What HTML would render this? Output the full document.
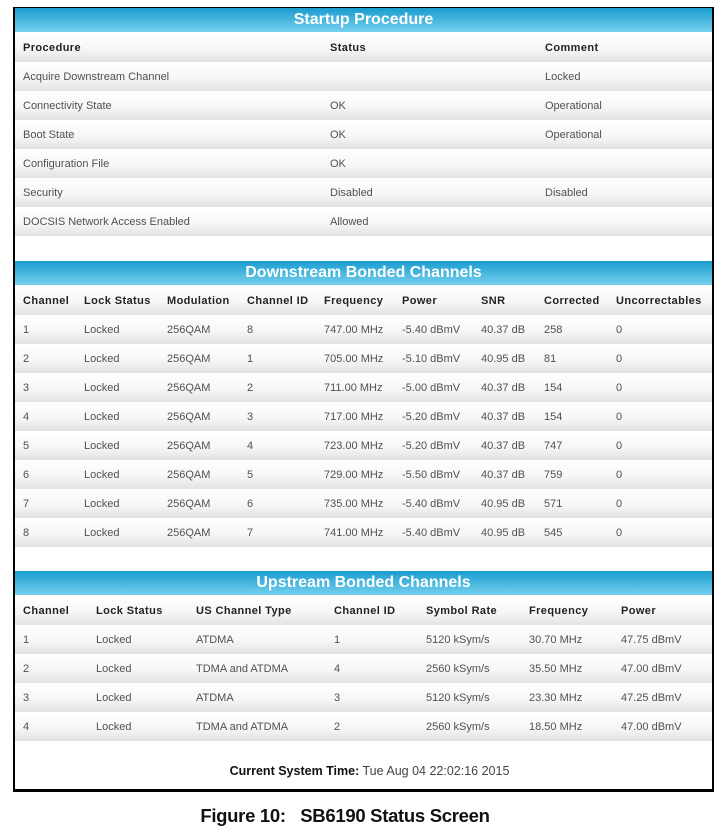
<!DOCTYPE html>
<html><head><meta charset="utf-8"><style>
*{margin:0;padding:0;box-sizing:border-box}
body{width:725px;height:833px;background:#fff;position:relative;font-family:"Liberation Sans",Arial,sans-serif;overflow:hidden}
.frame{position:absolute;left:13px;top:7px;width:701px;height:785px;border:2px solid #000;border-bottom-width:3px}
.bar{position:absolute;left:15px;width:697px;height:24px;background:linear-gradient(#1a9ccf,#76d0ee);color:#fff;font-weight:bold;font-size:16px;text-align:center;line-height:24px}
.row{position:absolute;left:15px;width:697px;height:29px;background:linear-gradient(#fff 0%,#f7f7f7 55%,#e2e2e2 100%)}
.row span{position:absolute;top:1px;line-height:29px;font-size:11px;color:#505050;white-space:nowrap}
.row.h span{font-weight:bold;color:#222;letter-spacing:.4px}
.time{position:absolute;top:764px;left:0;width:725px;text-align:center;font-size:12.5px;color:#444;padding-left:14px}
.time b{color:#111}
.cap{position:absolute;top:805px;left:0;width:690px;text-align:center;font-size:18.5px;font-weight:bold;color:#111;letter-spacing:-0.3px}
</style></head><body>
<div class="frame"></div>

<div class="bar" style="top:8px">Startup Procedure</div>
<div class="row h" style="top:33px"><span style="left:8px">Procedure</span><span style="left:315px">Status</span><span style="left:530px">Comment</span></div>
<div class="row" style="top:62px"><span style="left:8px">Acquire Downstream Channel</span><span style="left:530px">Locked</span></div>
<div class="row" style="top:91px"><span style="left:8px">Connectivity State</span><span style="left:315px">OK</span><span style="left:530px">Operational</span></div>
<div class="row" style="top:120px"><span style="left:8px">Boot State</span><span style="left:315px">OK</span><span style="left:530px">Operational</span></div>
<div class="row" style="top:149px"><span style="left:8px">Configuration File</span><span style="left:315px">OK</span></div>
<div class="row" style="top:178px"><span style="left:8px">Security</span><span style="left:315px">Disabled</span><span style="left:530px">Disabled</span></div>
<div class="row" style="top:207px"><span style="left:8px">DOCSIS Network Access Enabled</span><span style="left:315px">Allowed</span></div>

<div class="bar" style="top:261px">Downstream Bonded Channels</div>
<div class="row h" style="top:286px"><span style="left:8px">Channel</span><span style="left:69px">Lock Status</span><span style="left:152px">Modulation</span><span style="left:232px">Channel ID</span><span style="left:309px">Frequency</span><span style="left:387px">Power</span><span style="left:466px">SNR</span><span style="left:529px">Corrected</span><span style="left:601px">Uncorrectables</span></div>
<div class="row" style="top:315px"><span style="left:8px">1</span><span style="left:69px">Locked</span><span style="left:152px">256QAM</span><span style="left:232px">8</span><span style="left:309px">747.00 MHz</span><span style="left:387px">-5.40 dBmV</span><span style="left:466px">40.37 dB</span><span style="left:529px">258</span><span style="left:601px">0</span></div>
<div class="row" style="top:344px"><span style="left:8px">2</span><span style="left:69px">Locked</span><span style="left:152px">256QAM</span><span style="left:232px">1</span><span style="left:309px">705.00 MHz</span><span style="left:387px">-5.10 dBmV</span><span style="left:466px">40.95 dB</span><span style="left:529px">81</span><span style="left:601px">0</span></div>
<div class="row" style="top:373px"><span style="left:8px">3</span><span style="left:69px">Locked</span><span style="left:152px">256QAM</span><span style="left:232px">2</span><span style="left:309px">711.00 MHz</span><span style="left:387px">-5.00 dBmV</span><span style="left:466px">40.37 dB</span><span style="left:529px">154</span><span style="left:601px">0</span></div>
<div class="row" style="top:402px"><span style="left:8px">4</span><span style="left:69px">Locked</span><span style="left:152px">256QAM</span><span style="left:232px">3</span><span style="left:309px">717.00 MHz</span><span style="left:387px">-5.20 dBmV</span><span style="left:466px">40.37 dB</span><span style="left:529px">154</span><span style="left:601px">0</span></div>
<div class="row" style="top:431px"><span style="left:8px">5</span><span style="left:69px">Locked</span><span style="left:152px">256QAM</span><span style="left:232px">4</span><span style="left:309px">723.00 MHz</span><span style="left:387px">-5.20 dBmV</span><span style="left:466px">40.37 dB</span><span style="left:529px">747</span><span style="left:601px">0</span></div>
<div class="row" style="top:460px"><span style="left:8px">6</span><span style="left:69px">Locked</span><span style="left:152px">256QAM</span><span style="left:232px">5</span><span style="left:309px">729.00 MHz</span><span style="left:387px">-5.50 dBmV</span><span style="left:466px">40.37 dB</span><span style="left:529px">759</span><span style="left:601px">0</span></div>
<div class="row" style="top:489px"><span style="left:8px">7</span><span style="left:69px">Locked</span><span style="left:152px">256QAM</span><span style="left:232px">6</span><span style="left:309px">735.00 MHz</span><span style="left:387px">-5.40 dBmV</span><span style="left:466px">40.95 dB</span><span style="left:529px">571</span><span style="left:601px">0</span></div>
<div class="row" style="top:518px"><span style="left:8px">8</span><span style="left:69px">Locked</span><span style="left:152px">256QAM</span><span style="left:232px">7</span><span style="left:309px">741.00 MHz</span><span style="left:387px">-5.40 dBmV</span><span style="left:466px">40.95 dB</span><span style="left:529px">545</span><span style="left:601px">0</span></div>

<div class="bar" style="top:571px">Upstream Bonded Channels</div>
<div class="row h" style="top:596px"><span style="left:8px">Channel</span><span style="left:81px">Lock Status</span><span style="left:181px">US Channel Type</span><span style="left:319px">Channel ID</span><span style="left:411px">Symbol Rate</span><span style="left:514px">Frequency</span><span style="left:606px">Power</span></div>
<div class="row" style="top:625px"><span style="left:8px">1</span><span style="left:81px">Locked</span><span style="left:181px">ATDMA</span><span style="left:319px">1</span><span style="left:411px">5120 kSym/s</span><span style="left:514px">30.70 MHz</span><span style="left:606px">47.75 dBmV</span></div>
<div class="row" style="top:654px"><span style="left:8px">2</span><span style="left:81px">Locked</span><span style="left:181px">TDMA and ATDMA</span><span style="left:319px">4</span><span style="left:411px">2560 kSym/s</span><span style="left:514px">35.50 MHz</span><span style="left:606px">47.00 dBmV</span></div>
<div class="row" style="top:683px"><span style="left:8px">3</span><span style="left:81px">Locked</span><span style="left:181px">ATDMA</span><span style="left:319px">3</span><span style="left:411px">5120 kSym/s</span><span style="left:514px">23.30 MHz</span><span style="left:606px">47.25 dBmV</span></div>
<div class="row" style="top:712px"><span style="left:8px">4</span><span style="left:81px">Locked</span><span style="left:181px">TDMA and ATDMA</span><span style="left:319px">2</span><span style="left:411px">2560 kSym/s</span><span style="left:514px">18.50 MHz</span><span style="left:606px">47.00 dBmV</span></div>

<div class="time"><b>Current System Time:</b> Tue Aug 04 22:02:16 2015</div>
<div class="cap">Figure 10:&nbsp;&nbsp; SB6190 Status Screen</div>
</body></html>
